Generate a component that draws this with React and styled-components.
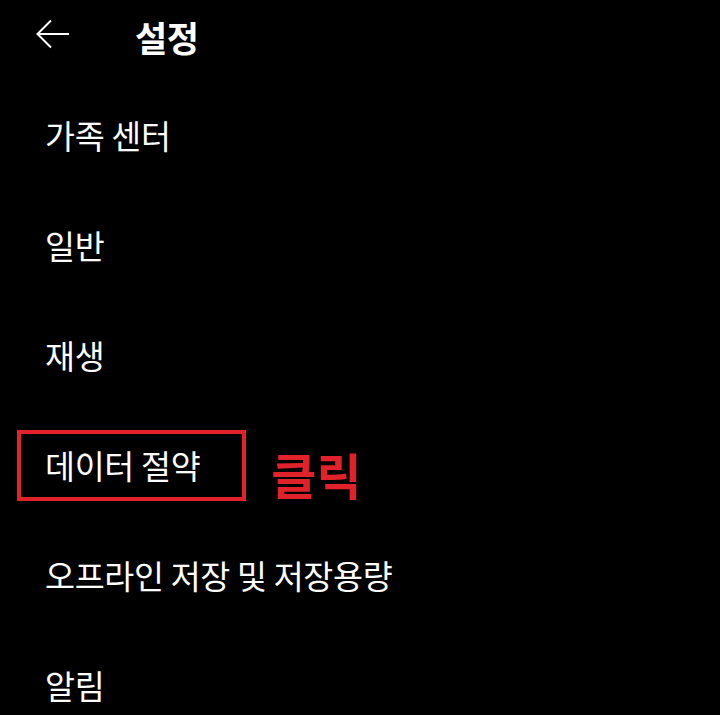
import React from "react";
import styled, { createGlobalStyle } from "styled-components";

const GlobalStyle = createGlobalStyle`
  html, body {
    margin: 0;
    padding: 0;
    background: #000;
  }
  body {
    font-family: "Noto Sans CJK KR", "Noto Sans", sans-serif;
    color: #fff;
  }
`;

const Screen = styled.div`
  width: 720px;
  height: 715px;
  background: #000;
  overflow: hidden;
  display: flex;
  flex-direction: column;
`;

const Header = styled.div`
  flex-shrink: 0;
  height: 72px;
  display: flex;
  align-items: center;
  padding-left: 36px;
  gap: 63px;
`;

const BackButton = styled.div`
  width: 36px;
  height: 30px;
  display: flex;
  align-items: center;
  margin-top: -4px;
`;

const Title = styled.h1`
  margin: 0;
  font-size: 35px;
  line-height: 1;
  font-weight: 700;
  letter-spacing: -0.5px;
`;

const MenuList = styled.ul`
  flex-shrink: 0;
  list-style: none;
  margin: 0;
  padding: 8px 0 0;
`;

const MenuRow = styled.li`
  height: 110px;
  display: flex;
  align-items: center;
  padding-left: 45px;
  gap: 25px;
`;

const Label = styled.span`
  font-size: 32.6px;
  line-height: 1;
  font-weight: 400;
  letter-spacing: -0.3px;
  ${({ $highlight }) =>
    $highlight &&
    `
    border: 4px solid #e1222b;
    height: 63px;
    display: flex;
    align-items: center;
    padding: 0 42px 0 24px;
    margin-left: -28px;
  `}
`;

const Note = styled.span`
  color: #e1222b;
  font-size: 49px;
  line-height: 1;
  font-weight: 700;
  margin-top: 16px;
`;

const items = [
  "가족 센터",
  "일반",
  "재생",
  "데이터 절약",
  "오프라인 저장 및 저장용량",
  "알림",
];

export default function App() {
  return (
    <Screen>
      <GlobalStyle />
      <Header>
        <BackButton>
          <svg width="34" height="30" viewBox="0 0 34 30" fill="none">
            <path
              d="M33 15H2M15 1.5L1.5 15L15 28.5"
              stroke="#fff"
              strokeWidth="2"
            />
          </svg>
        </BackButton>
        <Title>설정</Title>
      </Header>
      <MenuList>
        {items.map((item) => (
          <MenuRow key={item}>
            <Label $highlight={item === "데이터 절약"}>{item}</Label>
            {item === "데이터 절약" && <Note>클릭</Note>}
          </MenuRow>
        ))}
      </MenuList>
    </Screen>
  );
}
